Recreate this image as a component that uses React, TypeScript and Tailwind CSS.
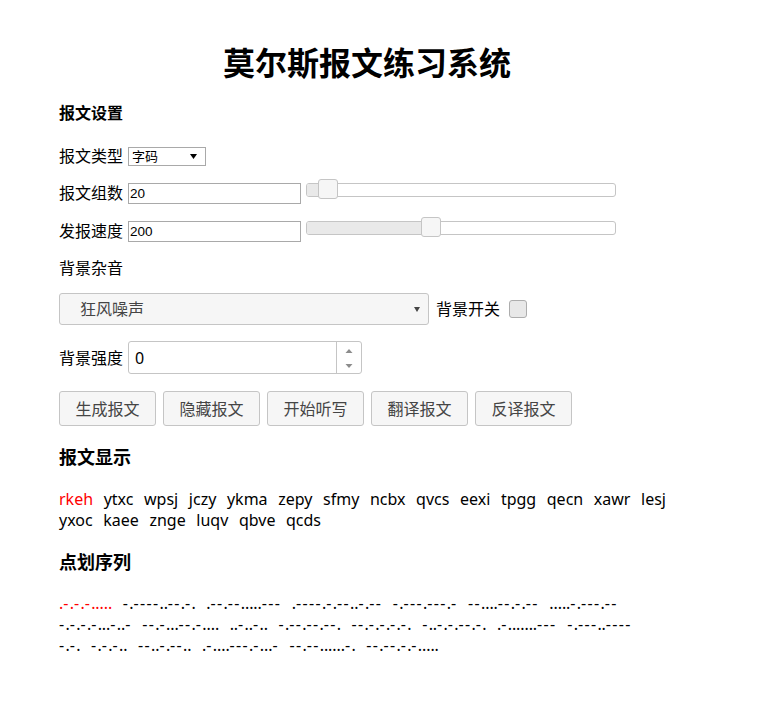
import React from "react";

const MORSE: Record<string, string> = {
  a: ".-", b: "-...", c: "-.-.", d: "-..", e: ".", f: "..-.", g: "--.", h: "....",
  i: "..", j: ".---", k: "-.-", l: ".-..", m: "--", n: "-.", o: "---", p: ".--.",
  q: "--.-", r: ".-.", s: "...", t: "-", u: "..-", v: "...-", w: ".--", x: "-..-",
  y: "-.--", z: "--..",
};

const WORDS = [
  "rkeh", "ytxc", "wpsj", "jczy", "ykma", "zepy", "sfmy", "ncbx", "qvcs", "eexi",
  "tpgg", "qecn", "xawr", "lesj", "yxoc", "kaee", "znge", "luqv", "qbve", "qcds",
];

const code = (w: string) => w.split("").map((c) => MORSE[c]).join("");

function Slider({ left }: { left: number }) {
  return (
    <div className="relative mt-[4px] ml-[5px] h-[14px] w-[310px] rounded-[3px] border border-[#c5c5c5] bg-white">
      <div
        className="absolute left-0 top-0 h-full rounded-l-[2px] bg-[#e9e9e9]"
        style={{ width: left + 10 }}
      />
      <div
        className="absolute top-[-5px] h-[20px] w-[20px] rounded-[3px] border border-[#c5c5c5] bg-[#f6f6f6]"
        style={{ left }}
      />
    </div>
  );
}

function Tri({ up }: { up?: boolean }) {
  return (
    <svg width="8" height="6" viewBox="0 0 8 6" className="block">
      {up ? (
        <path d="M0.5 5 L4 1 L7.5 5 Z" fill="#8c8c8c" />
      ) : (
        <path d="M0.5 1 L4 5 L7.5 1 Z" fill="#8c8c8c" />
      )}
    </svg>
  );
}

function MorseCode({ c }: { c: string }) {
  const runs = c.match(/-+|\.+/g) || [];
  return (
    <>
      {runs.map((r, i) =>
        r[0] === "-" ? (
          <span key={i} className="tracking-[1.35px]">{r}</span>
        ) : (
          <span key={i} className="tracking-[-0.1px]">{r}</span>
        )
      )}
    </>
  );
}

function MorseLine({ codes, redFirst }: { codes: string[]; redFirst?: boolean }) {
  return (
    <div className="whitespace-nowrap">
      {codes.map((c, i) => (
        <span
          key={i}
          className={(i > 0 ? "ml-[10.6px] " : "") + (redFirst && i === 0 ? "text-[#ff0000]" : "")}
        >
          <MorseCode c={c} />
        </span>
      ))}
    </div>
  );
}

function WordLine({ words, redFirst }: { words: string[]; redFirst?: boolean }) {
  return (
    <div className="whitespace-nowrap">
      {words.map((w, i) => (
        <span
          key={w}
          className={(i > 0 ? "ml-[10.6px] " : "") + (redFirst && i === 0 ? "text-[#ff0000]" : "")}
        >
          {w}
        </span>
      ))}
    </div>
  );
}

export default function App() {
  const line1 = WORDS.slice(0, 7).map(code);
  const line2 = [...WORDS.slice(7, 14).map(code), code("yxo")];
  const line3 = [code("c"), ...WORDS.slice(15).map(code)];

  return (
    <div className="min-h-[713px] bg-white text-black font-['Noto_Sans','Noto_Sans_CJK_SC',sans-serif] text-[16px]">
      <div className="pl-[59px] pt-[39px] pb-10">
        <div className="w-[616px]">
          <h1 className="text-center text-[32px] leading-[48px] font-bold">莫尔斯报文练习系统</h1>

          <h2 className="mt-[14px] text-[16px] leading-[24px] font-bold">报文设置</h2>

          <div className="mt-[22px] flex h-[19px] items-center">
            <span className="leading-[19px]">报文类型</span>
            <div className="relative ml-[5px] flex h-[19px] w-[78px] items-center border border-[#a9a9a9] bg-white pl-[3px] text-[13px] leading-[17px]">
              字码
              <span className="absolute right-[8px] top-[6px]">
                <svg width="7" height="5" viewBox="0 0 7 5" className="block">
                  <path d="M0 0 L7 0 L3.5 5 Z" fill="#000" />
                </svg>
              </span>
            </div>
          </div>

          <div className="mt-[13px] flex h-[25px] items-start">
            <div className="mt-[4px] flex h-[21px] items-center">
              <span className="leading-[21px]">报文组数</span>
              <input
                readOnly
                defaultValue="20"
                className="ml-[5px] h-[21px] w-[173px] border border-[#a9a9a9] px-[1px] font-['Liberation_Sans',sans-serif] text-[13.5px] text-black outline-none"
              />
            </div>
            <Slider left={11} />
          </div>

          <div className="mt-[13px] flex h-[25px] items-start">
            <div className="mt-[4px] flex h-[21px] items-center">
              <span className="leading-[21px]">发报速度</span>
              <input
                readOnly
                defaultValue="200"
                className="ml-[5px] h-[21px] w-[173px] border border-[#a9a9a9] px-[1px] font-['Liberation_Sans',sans-serif] text-[13.5px] text-black outline-none"
              />
            </div>
            <Slider left={114} />
          </div>

          <div className="mt-[14px] leading-[24px]">背景杂音</div>

          <div className="mt-[13px] flex h-[32px] items-center">
            <div className="relative flex h-[32px] w-[370px] items-center rounded-[3px] border border-[#c5c5c5] bg-[#f6f6f6] pl-[20px] text-[#454545]">
              狂风噪声
              <span className="absolute right-[8px] top-[13px]">
                <svg width="6" height="5" viewBox="0 0 6 5" className="block">
                  <path d="M0 0 L6 0 L3 5 Z" fill="#454545" />
                </svg>
              </span>
            </div>
            <span className="ml-[7px]">背景开关</span>
            <span className="ml-[9px] h-[18px] w-[18px] rounded-[3px] border border-[#adadad] bg-[#e8e8e8]" />
          </div>

          <div className="mt-[16px] flex h-[33px] items-center">
            <span>背景强度</span>
            <div className="ml-[5px] flex h-[33px] w-[234px] rounded-[3px] border border-[#c5c5c5] bg-white">
              <div className="flex flex-1 items-center pl-[6px] text-[16px]">0</div>
              <div className="flex w-[25px] flex-col border-l border-[#c5c5c5]">
                <div className="flex flex-1 items-center justify-center pt-[1px]">
                  <Tri up />
                </div>
                <div className="flex flex-1 items-center justify-center">
                  <Tri />
                </div>
              </div>
            </div>
          </div>

          <div className="mt-[17px] flex gap-[7px]">
            {["生成报文", "隐藏报文", "开始听写", "翻译报文", "反译报文"].map((t) => (
              <button
                key={t}
                className="h-[35px] w-[97px] rounded-[3px] border border-[#c5c5c5] bg-[#f6f6f6] text-[16px] text-[#454545]"
              >
                {t}
              </button>
            ))}
          </div>

          <h2 className="mt-[18px] text-[18px] leading-[27px] font-bold">报文显示</h2>

          <div className="mt-[18px] leading-[21px]">
            <WordLine words={WORDS.slice(0, 14)} redFirst />
            <WordLine words={WORDS.slice(14)} />
          </div>

          <h2 className="mt-[18px] text-[18px] leading-[27px] font-bold">点划序列</h2>

          <div className="mt-[17px] leading-[21px]">
            <MorseLine codes={line1} redFirst />
            <MorseLine codes={line2} />
            <MorseLine codes={line3} />
          </div>
        </div>
      </div>
    </div>
  );
}
